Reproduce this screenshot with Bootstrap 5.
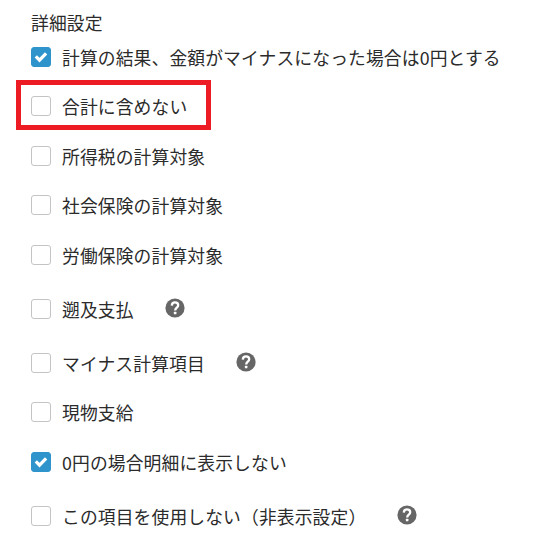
<!DOCTYPE html>
<html lang="ja">
<head>
<meta charset="utf-8">
<meta name="viewport" content="width=device-width, initial-scale=1">
<title>詳細設定</title>
<link href="https://cdn.jsdelivr.net/npm/bootstrap@5.3.0/dist/css/bootstrap.min.css" rel="stylesheet">
<style>
  body { font-family: "Noto Sans CJK JP", sans-serif; font-size: 17.8px; letter-spacing: .12px; line-height: 20px; color: #2b2b2b; background: #fff; }
  .settings { padding: 12px 0 0 31px; }
  .settings-title { font-size: inherit; font-weight: 400; line-height: 20px; margin: 0 0 15px; }
  .option { height: 49.45px; }
  .option-first { height: 20px; }
  .option-help { height: 54px; }
  .option .form-check-input { width: 20px; height: 20px; margin: 0; border: 1px solid #c4c4c4; border-radius: 3px; background-color: #fff; }
  .option .form-check-input:checked {
    background-color: #2e94cb; border-color: #2e94cb; background-size: 20px 20px; background-position: center;
    background-image: url("data:image/svg+xml,%3Csvg xmlns='http://www.w3.org/2000/svg' viewBox='0 0 20 20'%3E%3Cpath d='M4.8 9.3l3.7 3.8 6.6-6.8' fill='none' stroke='%23fff' stroke-width='3.2'/%3E%3C/svg%3E");
  }
  .option label { margin-left: 11px; white-space: nowrap; }
  .help-icon { width: 20px; height: 20px; margin: 0 0 1px 31.5px; flex: none; }
  .help-last { margin-left: 30.5px; }
  .highlight { position: absolute; left: -15px; bottom: -14px; width: 195px; height: 50px; border: 5px solid #ed1c24; pointer-events: none; }
</style>
</head>
<body>
<svg class="d-none" xmlns="http://www.w3.org/2000/svg">
  <symbol id="help" viewBox="0 0 20 20">
    <circle cx="10" cy="10" r="9.6" fill="#666"/>
    <path d="M6.8 7.6C6.9 5.4 8.1 4.4 10 4.4c1.9 0 3.2 1.1 3.2 2.8 0 2.4-3 2.5-3 5.2" fill="none" stroke="#fff" stroke-width="2.3"/>
    <rect x="8.9" y="13.8" width="2.5" height="2.5" rx=".5" fill="#fff"/>
  </symbol>
</svg>
<main class="settings">
  <h1 class="settings-title">詳細設定</h1>
  <form>
    <div class="option option-first d-flex align-items-end"><input class="form-check-input" type="checkbox" id="o1" checked><label for="o1">計算の結果、金額がマイナスになった場合は0円とする</label></div>
    <div class="option d-flex align-items-end position-relative"><input class="form-check-input" type="checkbox" id="o2"><label for="o2">合計に含めない</label><span class="highlight"></span></div>
    <div class="option d-flex align-items-end"><input class="form-check-input" type="checkbox" id="o3"><label for="o3">所得税の計算対象</label></div>
    <div class="option d-flex align-items-end"><input class="form-check-input" type="checkbox" id="o4"><label for="o4">社会保険の計算対象</label></div>
    <div class="option d-flex align-items-end"><input class="form-check-input" type="checkbox" id="o5"><label for="o5">労働保険の計算対象</label></div>
    <div class="option option-help d-flex align-items-end"><input class="form-check-input" type="checkbox" id="o6"><label for="o6">遡及支払</label><svg class="help-icon"><use href="#help"/></svg></div>
    <div class="option option-help d-flex align-items-end"><input class="form-check-input" type="checkbox" id="o7"><label for="o7">マイナス計算項目</label><svg class="help-icon"><use href="#help"/></svg></div>
    <div class="option d-flex align-items-end"><input class="form-check-input" type="checkbox" id="o8"><label for="o8">現物支給</label></div>
    <div class="option d-flex align-items-end"><input class="form-check-input" type="checkbox" id="o9" checked><label for="o9">0円の場合明細に表示しない</label></div>
    <div class="option option-help d-flex align-items-end"><input class="form-check-input" type="checkbox" id="o10"><label for="o10">この項目を使用しない（非表示設定）</label><svg class="help-icon help-last"><use href="#help"/></svg></div>
  </form>
</main>
<script src="https://cdn.jsdelivr.net/npm/bootstrap@5.3.0/dist/js/bootstrap.bundle.min.js"></script>
</body>
</html>
